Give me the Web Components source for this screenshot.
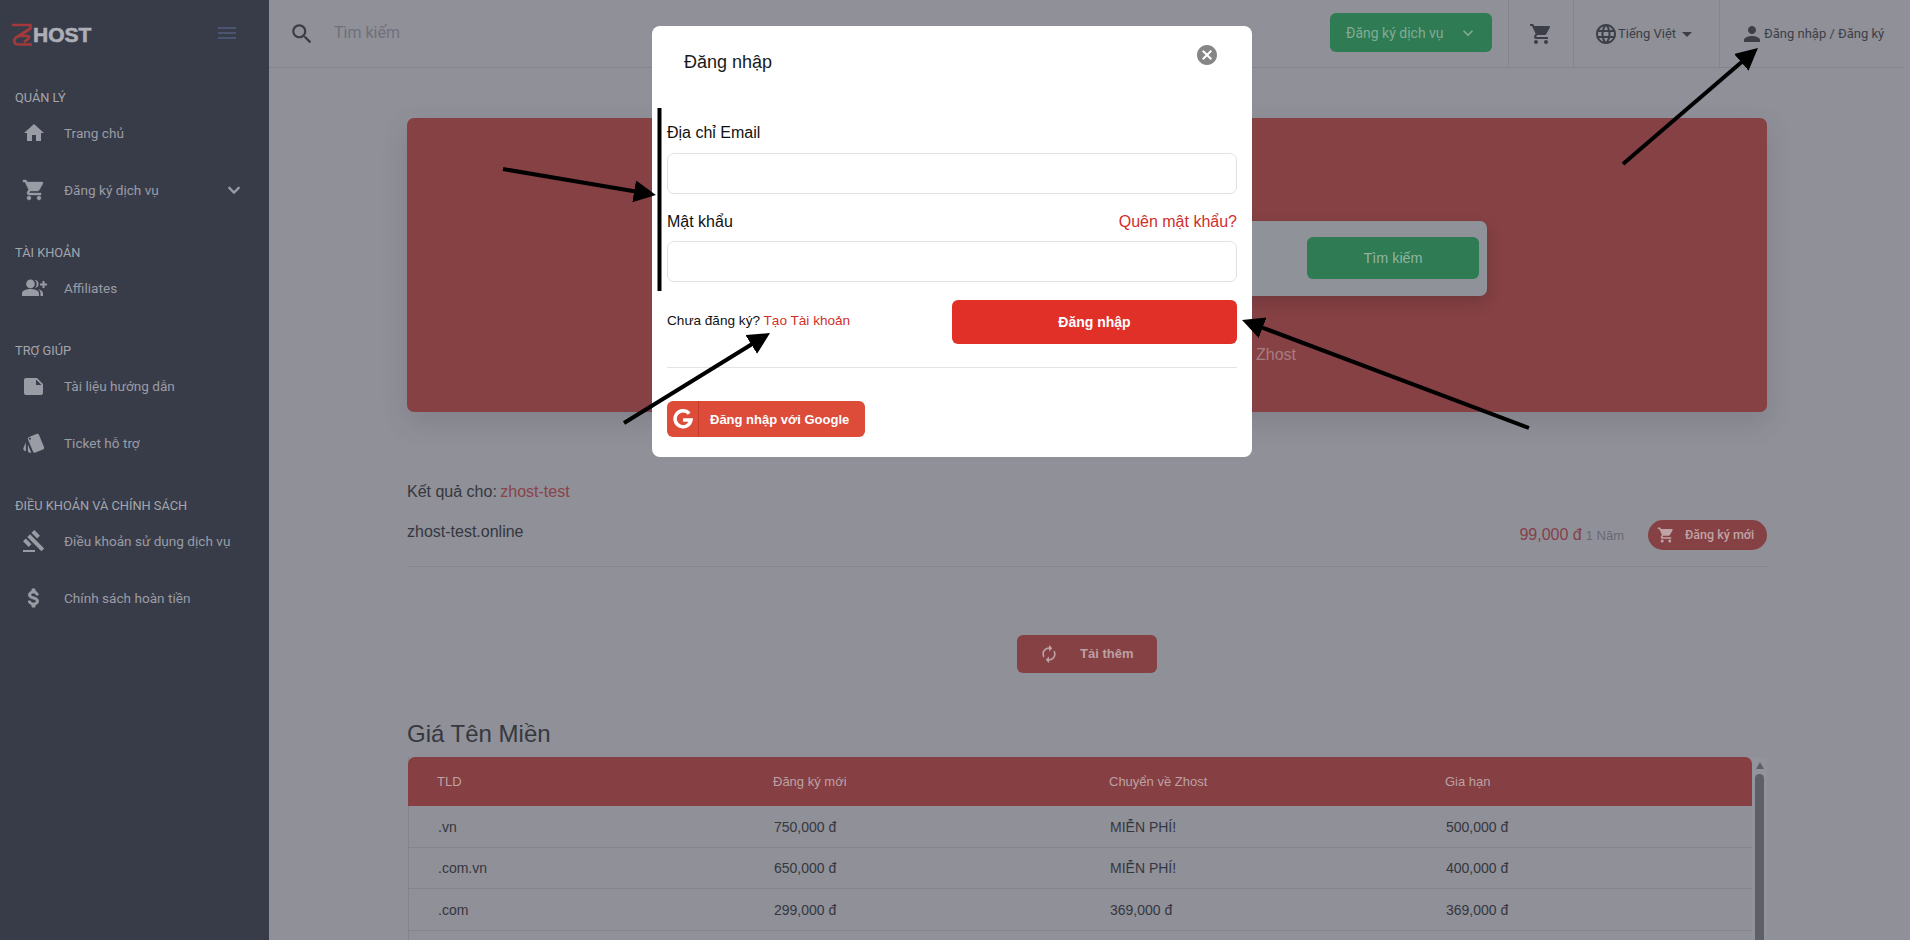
<!DOCTYPE html>
<html lang="vi">
<head>
<meta charset="utf-8">
<title>Zhost</title>
<style>
html,body{margin:0;height:940px;overflow:hidden;background:#8f9098;font-family:"Liberation Sans",Arial,sans-serif}
</style>
</head>
<body>
<z-app></z-app>
<script>
const ICONS={
home:'M10 20v-6h4v6h5v-8h3L12 3 2 12h3v8z',
cart:'M7 18c-1.1 0-1.99.9-1.99 2S5.9 22 7 22s2-.9 2-2-.9-2-2-2zM1 2v2h2l3.6 7.59-1.35 2.45c-.16.28-.25.61-.25.96 0 1.1.9 2 2 2h12v-2H7.42c-.14 0-.25-.11-.25-.25l.03-.12.9-1.63h7.45c.75 0 1.41-.41 1.75-1.03l3.58-6.49c.08-.14.12-.31.12-.48 0-.55-.45-1-1-1H5.21l-.94-2H1zm16 16c-1.1 0-1.99.9-1.99 2s.89 2 1.99 2 2-.9 2-2-.9-2-2-2z',
chevron:'M16.59 8.59L12 13.17 7.41 8.59 6 10l6 6 6-6z',
search:'M15.5 14h-.79l-.28-.27C15.41 12.59 16 11.11 16 9.5 16 5.91 13.09 3 9.5 3S3 5.91 3 9.5 5.91 16 9.5 16c1.61 0 3.09-.59 4.23-1.57l.27.28v.79l5 4.99L20.49 19l-4.99-5zm-6 0C7.01 14 5 11.99 5 9.5S7.01 5 9.5 5 14 7.01 14 9.5 11.99 14 9.5 14z',
person:'M12 12c2.21 0 4-1.79 4-4s-1.79-4-4-4-4 1.79-4 4 1.79 4 4 4zm0 2c-2.67 0-8 1.34-8 4v2h16v-2c0-2.66-5.33-4-8-4z',
globe:'M11.99 2C6.47 2 2 6.48 2 12s4.47 10 9.99 10C17.52 22 22 17.52 22 12S17.52 2 11.99 2zm6.93 6h-2.95c-.32-1.25-.78-2.45-1.38-3.56 1.84.63 3.37 1.91 4.33 3.56zM12 4.04c.83 1.2 1.48 2.53 1.91 3.96h-3.82c.43-1.43 1.08-2.76 1.91-3.96zM4.26 14C4.1 13.36 4 12.69 4 12s.1-1.36.26-2h3.38c-.08.66-.14 1.32-.14 2s.06 1.34.14 2H4.26zm.82 2h2.95c.32 1.25.78 2.45 1.38 3.56-1.84-.63-3.37-1.9-4.33-3.56zm2.95-8H5.08c.96-1.66 2.49-2.93 4.33-3.56C8.81 5.55 8.35 6.75 8.03 8zM12 19.96c-.83-1.2-1.48-2.53-1.91-3.96h3.82c-.43 1.43-1.08 2.76-1.91 3.96zM14.34 14H9.66c-.09-.66-.16-1.32-.16-2s.07-1.35.16-2h4.68c.09.65.16 1.32.16 2s-.07 1.34-.16 2zm.25 5.56c.6-1.11 1.06-2.31 1.38-3.56h2.95c-.96 1.65-2.49 2.93-4.33 3.56zM16.36 14c.08-.66.14-1.32.14-2s-.06-1.34-.14-2h3.38c.16.64.26 1.31.26 2s-.1 1.36-.26 2h-3.38z',
groupadd:'M8.5 3.600a4.300 4.300 0 1 1 0 8.600a4.300 4.300 0 0 1 0-8.600zM0 20v-2.800c0-3 5.500-4.200 8.500-4.200s8.500 1.200 8.500 4.200V20zM12.800 4c1.200.9 1.900 2.300 1.900 3.900s-.7 3-1.900 3.900c2.200.2 3.800-1.700 3.800-3.900S15 3.800 12.800 4zM16 13.300c1.500.9 2.500 2.200 2.500 3.900V20H21v-2.800c0-2-2.500-3.400-5-3.900zM20.500 5v2.500H18v2h2.500V12h2V9.500H25v-2h-2.500V5z',
note:'M4 4h11l6 6v9c0 1.1-.9 2-2 2H4c-1.1 0-2-.9-2-2V6c0-1.100.9-2 2-2zm10 1.500V11h5.500z',
style:'M2.53 19.65l1.34.56v-9.03l-2.43 5.86c-.41 1.02.08 2.19 1.09 2.61zm19.5-3.7L17.07 3.98c-.31-.75-1.04-1.21-1.81-1.23-.26 0-.53.04-.79.15L7.1 5.95c-.75.31-1.21 1.03-1.23 1.8-.01.27.04.54.15.8l4.96 11.97c.31.76 1.05 1.22 1.83 1.23.26 0 .52-.05.77-.15l7.36-3.05c1.02-.42 1.51-1.59 1.09-2.6zM7.88 8.75c-.55 0-1-.45-1-1s.45-1 1-1 1 .45 1 1-.45 1-1 1zm-2 11c0 1.1.9 2 2 2h1.45l-3.45-8.34v6.34z',
gavel:'M1 21h12v2H1zM5.245 8.07l2.83-2.827 14.14 14.142-2.828 2.828zM12.317 1l5.657 5.656-2.83 2.83-5.654-5.66zM3.825 9.485l5.657 5.657-2.828 2.828-5.657-5.657z',
money:'M11.8 10.9c-2.27-.59-3-1.2-3-2.15 0-1.09 1.01-1.85 2.7-1.85 1.78 0 2.44.85 2.5 2.1h2.21c-.07-1.72-1.12-3.3-3.21-3.81V3h-3v2.16c-1.94.42-3.5 1.68-3.5 3.61 0 2.31 1.91 3.46 4.7 4.13 2.5.6 3 1.48 3 2.41 0 .69-.49 1.79-2.7 1.79-2.06 0-2.87-.92-2.98-2.1h-2.2c.12 2.19 1.76 3.42 3.68 3.83V21h3v-2.15c1.95-.37 3.5-1.5 3.5-3.55 0-2.84-2.43-3.81-4.7-4.4z',
sync:'M12 6v3l4-4-4-4v3c-4.42 0-8 3.58-8 8 0 1.57.46 3.03 1.24 4.26L6.7 14.8c-.45-.83-.7-1.79-.7-2.8 0-3.31 2.69-6 6-6zm6.76 1.74L17.3 9.2c.44.84.7 1.79.7 2.8 0 3.31-2.69 6-6 6v-3l-4 4 4 4v-3c4.42 0 8-3.58 8-8 0-1.57-.46-3.03-1.24-4.26z',
cancel:'M12 2C6.47 2 2 6.47 2 12s4.47 10 10 10 10-4.47 10-10S17.53 2 12 2zm5 13.59L15.59 17 12 13.41 8.41 17 7 15.59 10.59 12 7 8.41 8.41 7 12 10.59 15.59 7 17 8.41 13.41 12 17 15.59z',
caret:'M7 10l5 5 5-5z'
};
class ZIcon extends HTMLElement{
  connectedCallback(){
    if(this.shadowRoot)return;
    const s=this.getAttribute('size')||24,n=this.getAttribute('name'),b=this.getAttribute('bold');
    const st=b?` stroke="currentColor" stroke-width="${b}"`:'';
    this.attachShadow({mode:'open'}).innerHTML=`<style>:host{display:inline-flex;flex:none;width:${s}px;height:${s}px;color:inherit}svg{display:block;width:100%;height:100%;fill:currentColor;overflow:visible}</style><svg viewBox="0 0 24 24"${st}><path d="${ICONS[n]}"/></svg>`;
  }
}
customElements.define('z-icon',ZIcon);

class ZNavItem extends HTMLElement{
  constructor(){super();this.attachShadow({mode:'open'}).innerHTML=`<style>
  :host{display:flex;align-items:center;height:40px;margin-bottom:17px;padding:0 23px 0 20px;color:#9a9ca5;font:13.6px/18px Roboto,"Liberation Sans",sans-serif}
  :host(:last-child){margin-bottom:0}
  .ic{width:27px;height:24px;display:flex;justify-content:center;margin-right:17px}
  .tx{flex:1;white-space:nowrap}
  </style><span class="ic"><slot name="icon"></slot></span><span class="tx"><slot></slot></span><slot name="end"></slot>`}
}
customElements.define('z-nav-item',ZNavItem);

class ZNavGroup extends HTMLElement{
  constructor(){super();this.attachShadow({mode:'open'}).innerHTML=`<style>
  :host{display:block;margin-bottom:35px}
  h4{margin:0 0 7px;padding-left:15px;height:16px;font:400 12.8px/16px Roboto,"Liberation Sans",sans-serif;color:#a4a6ad}
  </style><h4>${this.getAttribute('label')}</h4><slot></slot>`}
}
customElements.define('z-nav-group',ZNavGroup);

class ZSidebar extends HTMLElement{
  constructor(){super();this.attachShadow({mode:'open'}).innerHTML=`<style>
  :host{display:block;width:269px;flex:none;height:940px;background:#383c49}
  header{height:67px;padding-bottom:23px;display:flex;align-items:flex-start}
  .logo{display:flex;align-items:center;margin:23px 0 0 11px;height:23px;flex:1}
  .logo span{font:700 21px/23px "Liberation Sans",sans-serif;color:#aeafb6;-webkit-text-stroke:.6px #aeafb6;margin-left:0}
  .burger{width:18px;margin:27px 33px 0 0;display:grid;gap:3px}
  .burger i{display:block;height:2px;background:#4b5470}
  </style><header><div class="logo"><svg width="22" height="23" viewBox="0 0 22 23" fill="none" stroke="#a23a3c" stroke-width="2.700" stroke-linejoin="round"><path d="M1 2H19.500V5.500L8 13H16.500Q19.500 13 17 16L13 19"/><path d="M19.500 5.500L5 14.500Q2.500 16.500 3.500 19.500Q4.500 21.500 7.500 21.500H21"/></svg><span>HOST</span></div><div class="burger"><i></i><i></i><i></i></div></header><slot></slot>`}
}
customElements.define('z-sidebar',ZSidebar);

class ZTopbar extends HTMLElement{
  constructor(){super();this.attachShadow({mode:'open'}).innerHTML=`<style>
  :host{display:flex;height:67px;margin-right:6px;border-bottom:1px solid #83848c;color:#3c3e48;font:13px/18px Roboto,"Liberation Sans",sans-serif}
  .search{flex:1;display:flex;align-items:center;padding-left:20px;gap:19px;color:#3a3c46}
  .search span{font-size:16px;line-height:18px;color:#6f7079;margin-top:-2px}
  .btn{align-self:flex-start;margin:13px 16px 0 0;width:162px;height:39px;box-sizing:border-box;padding:0 14px 0 16px;background:#2f7b53;border-radius:6px;color:#82ab96;font-size:14px;display:flex;align-items:center;justify-content:space-between}
  .cell{border-left:1px solid #84858d;display:flex;align-items:center;box-sizing:border-box}
  .c1{width:65px;justify-content:center}
  .c2{width:146px;padding-left:20px}
  .c2 z-icon:last-child{margin-left:-1px}
  .c3{width:185px;padding-left:20px}
  </style>
  <div class="search"><z-icon name="search" size="26"></z-icon><span>Tìm kiếm</span></div>
  <div class="btn"><span>Đăng ký dịch vụ</span><z-icon name="chevron" size="20"></z-icon></div>
  <div class="cell c1"><z-icon name="cart" size="24"></z-icon></div>
  <div class="cell c2"><z-icon name="globe" size="24"></z-icon><span>Tiếng Việt</span><z-icon name="caret" size="24"></z-icon></div>
  <div class="cell c3"><z-icon name="person" size="24"></z-icon><span>Đăng nhập / Đăng ký</span></div>`}
}
customElements.define('z-topbar',ZTopbar);

class ZHero extends HTMLElement{
  constructor(){super();this.attachShadow({mode:'open'}).innerHTML=`<style>
  :host{display:block;height:294px;box-sizing:border-box;padding-top:103px;background:#864144;border-radius:7px;box-shadow:0 10px 26px rgba(60,60,70,.18)}
  .box{width:800px;height:75px;margin:0 auto;box-sizing:border-box;padding:16px 8px 16px;background:#909299;border-radius:7px;display:flex;justify-content:flex-end;box-shadow:0 6px 14px rgba(50,30,35,.25)}
  .go{width:172px;height:42px;background:#2f7b53;border-radius:6px;color:#8fb5a2;display:flex;align-items:center;justify-content:center;font-size:14.4px}
  p{margin:49px 0 0 849px;font-size:16px;line-height:20px;color:#a87d80}
  </style><div class="box"><div class="go">Tìm kiếm</div></div><p>Zhost</p>`}
}
customElements.define('z-hero',ZHero);

class ZResults extends HTMLElement{
  constructor(){super();this.attachShadow({mode:'open'}).innerHTML=`<style>
  :host{display:block;color:#35373f;font-size:16px;line-height:20px}
  .q{margin-top:70px}.q b{font-weight:400;color:#8a424b;margin-left:-1px}
  .row{margin-top:18px;display:flex;justify-content:space-between;padding-bottom:16px;border-bottom:1px solid #83848c}
  .row>span{margin-top:2px}
  .r{display:flex;align-items:center}
  .price{color:#85404a}
  .y{font-size:13px;color:#696a75;margin:2px 24px 0 4px}
  .add{width:119px;height:30px;box-sizing:border-box;padding-left:9px;border-radius:15px;background:#864144;color:#c0a3a6;display:flex;align-items:center;font:500 12.5px/16px Roboto,"Liberation Sans",sans-serif;gap:10px}
  .more{margin:68px auto 0;width:140px;height:38px;box-sizing:border-box;padding-left:22px;background:#864144;border-radius:6px;color:#bca0a3;font:700 13px/16px "Liberation Sans",sans-serif;display:flex;align-items:center;gap:21px}
  </style>
  <div class="q">Kết quả cho: <b>zhost-test</b></div>
  <div class="row"><span>zhost-test.online</span><div class="r"><span class="price">99,000 đ</span><span class="y">1 Năm</span><div class="add"><z-icon name="cart" size="18"></z-icon><span>Đăng ký mới</span></div></div></div>
  <div class="more"><z-icon name="sync" size="20"></z-icon><span>Tải thêm</span></div>`}
}
customElements.define('z-results',ZResults);

class ZPriceTable extends HTMLElement{
  constructor(){super();
    const rows=[['.vn','750,000 đ','MIỄN PHÍ!','500,000 đ'],['.com.vn','650,000 đ','MIỄN PHÍ!','400,000 đ'],['.com','299,000 đ','369,000 đ','369,000 đ']];
    const r=c=>`<div>${c}</div>`;
    this.attachShadow({mode:'open'}).innerHTML=`<style>
  :host{display:block;margin-top:47px}
  h2{margin:0 0 9px;font:400 24px/28px "Liberation Sans",sans-serif;color:#36383f}
  .wrap{display:flex;width:1359px;margin-left:1px;height:200px;overflow:hidden}
  .t{width:1344px;flex:none;border-left:1px solid #83848c;box-sizing:border-box;font-size:14px;color:#35373f}
  .tr{display:grid;grid-template-columns:repeat(4,336px);height:41.5px;box-sizing:border-box;align-items:center;border-bottom:1px solid #83848c;line-height:18px;padding-top:1px}
  .tr div{padding-left:29px}
  .th{height:49px;border:0;margin-left:-1px;width:1344px;background:#863f43;color:#bda2a5;font-size:13px;border-radius:7px 7px 0 0}
  .filler{height:30px}
  .sb{width:15px;flex:none;box-sizing:border-box;background:#93949b;border-radius:3px 3px 0 0;padding:5px 3px 0;display:flex;flex-direction:column;align-items:center}
  .up{width:0;height:0;border:5px solid transparent;border-top:0;border-bottom:7px solid #5e6067;border-left-width:4.500px;border-right-width:4.500px}
  .th-mb{flex:1;width:9px;margin-top:5px;background:#5e6067;border-radius:4.500px 4.500px 0 0}
  </style><h2>Giá Tên Miền</h2>
  <div class="wrap"><div class="t"><div class="tr th">${['TLD','Đăng ký mới','Chuyển về Zhost','Gia hạn'].map(r).join('')}</div>${rows.map(x=>`<div class="tr">${x.map(r).join('')}</div>`).join('')}<div class="filler"></div></div><div class="sb"><div class="up"></div><div class="th-mb"></div></div></div>`}
}
customElements.define('z-price-table',ZPriceTable);

class ZLoginModal extends HTMLElement{
  constructor(){super();this.attachShadow({mode:'open'}).innerHTML=`<style>
  :host{display:block;position:absolute;left:652px;top:26px;width:600px;height:431px;box-sizing:border-box;padding:0 15px;background:#fff;border-radius:8px;color:#111;font-size:16px}
  h3{margin:0 0 51px;padding:25px 0 0 17px;height:22px;font:400 18px/22px "Liberation Sans",sans-serif;color:#1a1a1a}
  .close{position:absolute;right:33px;top:17px;color:#868686}
  .l{display:flex;justify-content:space-between;line-height:18px}
  .l a{color:#cf2f2b}
  .i{height:41px;box-sizing:border-box;border:1px solid #e1e1e4;border-radius:7px;background:#fff}
  .a{margin-top:11px}.b{margin-top:10px}.l2{margin-top:19px}
  .act{display:flex;justify-content:space-between;align-items:center;margin-top:18px;font-size:13.6px}
  .act>span{margin-top:-3px}
  .act a{color:#cf2f2b}
  .go{width:285px;height:44px;background:#e03028;border-radius:6px;color:#fff;font-weight:700;font-size:14px;display:flex;align-items:center;justify-content:center}
  hr{margin:23px 0 0;border:0;border-top:1px solid #e3e3e5}
  .g{margin-top:33px;width:198px;height:36px;border-radius:6px;background:#dd4b39;color:#fff;display:flex;align-items:center;font-weight:700;font-size:13px;overflow:hidden}
  .g i{width:31px;height:36px;border-right:1px solid #c63a2a;display:flex;align-items:center;justify-content:center;margin-right:11px;flex:none}
  </style>
  <h3>Đăng nhập</h3>
  <z-icon class="close" name="cancel" size="24"></z-icon>
  <div class="l"><span>Địa chỉ Email</span></div>
  <div class="i a"></div>
  <div class="l l2"><span>Mật khẩu</span><a>Quên mật khẩu?</a></div>
  <div class="i b"></div>
  <div class="act"><span>Chưa đăng ký? <a>Tạo Tài khoản</a></span><div class="go">Đăng nhập</div></div>
  <hr>
  <div class="g"><i><svg width="20" height="20" viewBox="0 0 20 20" fill="none" stroke="#fff" stroke-width="3.500"><path d="M16.200 4.600A8 8 0 1 0 18 11H10"/></svg></i><span>Đăng nhập với Google</span></div>`}
}
customElements.define('z-login-modal',ZLoginModal);

class ZArrows extends HTMLElement{
  constructor(){super();this.attachShadow({mode:'open'}).innerHTML=`<style>
  :host{display:block;position:absolute;left:0;top:0;width:1910px;height:940px;pointer-events:none}
  svg{display:block}
  </style><svg width="1910" height="940" stroke="#000" stroke-width="4" fill="none">
  <defs><marker id="h" markerUnits="userSpaceOnUse" markerWidth="26" markerHeight="24" refX="12" refY="11" orient="auto"><path d="M0 0L22 11L0 22z" fill="#000" stroke="none"/></marker></defs>
  <path d="M659.500 108V291" stroke-width="4"/>
  <path d="M503 169L646 193.300" marker-end="url(#h)"/>
  <path d="M624 423L761.500 338.200" marker-end="url(#h)"/>
  <path d="M1529 428L1251.400 323.500" marker-end="url(#h)"/>
  <path d="M1623 164L1750.400 54.500" marker-end="url(#h)"/>
  </svg>`}
}
customElements.define('z-arrows',ZArrows);

class ZApp extends HTMLElement{
  constructor(){super();this.attachShadow({mode:'open'}).innerHTML=`<style>
  :host{display:flex;width:1910px;height:940px;overflow:hidden;position:relative;font-family:"Liberation Sans",Arial,sans-serif}
  main{flex:1;min-width:0;background:#8f9098}
  .content{padding:50px 143px 0 138px}
  </style>
  <z-sidebar>
    <z-nav-group label="QUẢN LÝ">
      <z-nav-item><z-icon slot="icon" name="home" size="24"></z-icon>Trang chủ</z-nav-item>
      <z-nav-item><z-icon slot="icon" name="cart" size="24" bold=".4"></z-icon>Đăng ký dịch vụ<z-icon slot="end" name="chevron" size="24" bold=".4"></z-icon></z-nav-item>
    </z-nav-group>
    <z-nav-group label="TÀI KHOẢN">
      <z-nav-item><z-icon slot="icon" name="groupadd" size="24"></z-icon>Affiliates</z-nav-item>
    </z-nav-group>
    <z-nav-group label="TRỢ GIÚP">
      <z-nav-item><z-icon slot="icon" name="note" size="24"></z-icon>Tài liệu hướng dẫn</z-nav-item>
      <z-nav-item><z-icon slot="icon" name="style" size="24"></z-icon>Ticket hỗ trợ</z-nav-item>
    </z-nav-group>
    <z-nav-group label="ĐIỀU KHOẢN VÀ CHÍNH SÁCH">
      <z-nav-item><z-icon slot="icon" name="gavel" size="24"></z-icon>Điều khoản sử dụng dịch vụ</z-nav-item>
      <z-nav-item><z-icon slot="icon" name="money" size="24" bold="1"></z-icon>Chính sách hoàn tiền</z-nav-item>
    </z-nav-group>
  </z-sidebar>
  <main><z-topbar></z-topbar><div class="content"><z-hero></z-hero><z-results></z-results><z-price-table></z-price-table></div></main>
  <z-login-modal></z-login-modal>
  <z-arrows></z-arrows>`}
}
customElements.define('z-app',ZApp);
</script>
</body>
</html>
